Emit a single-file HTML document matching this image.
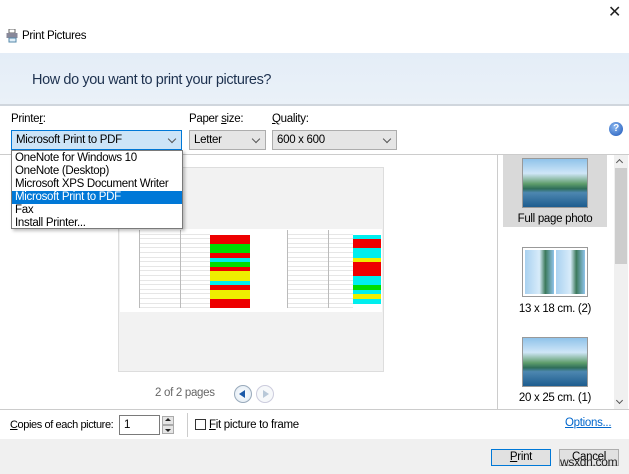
<!DOCTYPE html>
<html><head><meta charset="utf-8"><style>
*{margin:0;padding:0;box-sizing:border-box}
body{width:629px;height:474px;position:relative;overflow:hidden;background:#fff;font-family:"Liberation Sans",sans-serif;font-size:11px;color:#000;letter-spacing:-0.3px}
.a{position:absolute}
.dd{position:absolute;top:130px;height:20px;border:1px solid #adadad;background:#e5e5e5;padding:3px 4px;font-size:11.5px}
.chev{position:absolute;right:6px;top:5px;width:6px;height:6px;border-right:1px solid #555;border-bottom:1px solid #555;transform:rotate(45deg)}
.item{height:13px;line-height:13px;padding-left:3px;font-size:11.5px;white-space:nowrap}
.row{position:absolute;height:4.6px;border-bottom:1px solid #e6e6e6}
.thumb{position:absolute;left:522px;width:66px;border:1px solid #999;background:linear-gradient(#8fc3ea 0%,#cfe6f7 30%,#5d9c6a 52%,#2f6e5a 62%,#4d87b0 70%,#1d5c8f 100%)}
.lbl{position:absolute;left:503px;width:104px;text-align:center;font-size:11.5px}
.btn{position:absolute;top:449px;height:17px;width:60px;background:#e1e1e1;border:1px solid #adadad;text-align:center;line-height:15px;font-size:11.5px}
</style></head><body>
<div class="a" style="left:608px;top:2px;font-size:16px;color:#222">✕</div>
<svg class="a" style="left:6px;top:29px" width="12" height="14"><rect x="3" y="0" width="6" height="4" fill="#fff" stroke="#666"/><rect x="0.5" y="4" width="11" height="5" fill="#889" /><rect x="3" y="9" width="7" height="4" fill="#dfeef8" stroke="#58a"/></svg>
<div class="a" style="left:22px;top:30px;font-size:11.5px">Print Pictures</div>
<div class="a" style="left:0;top:53px;width:629px;height:53px;background:linear-gradient(#e4edf7,#eaf1f8);border-bottom:2px solid #d0d6dd"></div>
<div class="a" style="left:32px;top:72px;font-size:14.5px;color:#1e3250;letter-spacing:-0.4px">How do you want to print your pictures?</div>
<div class="a" style="left:11px;top:113px;font-size:11.5px">Printe<u>r</u>:</div>
<div class="a" style="left:189px;top:113px;font-size:11.5px">Paper <u>s</u>ize:</div>
<div class="a" style="left:272px;top:113px;font-size:11.5px"><u>Q</u>uality:</div>
<div class="dd" style="left:11px;width:171px;background:#cce4f7;border-color:#0078d7">Microsoft Print to PDF<span class="chev"></span></div>
<div class="dd" style="left:189px;width:77px">Letter<span class="chev"></span></div>
<div class="dd" style="left:272px;width:125px">600 x 600<span class="chev"></span></div>
<div class="a" style="left:609px;top:122px;width:14px;height:14px;border-radius:50%;background:radial-gradient(circle at 40% 35%,#8bb8f0,#1d56b8);color:#fff;font-size:10px;font-weight:bold;text-align:center;line-height:14px">?</div>
<div class="a" style="left:0;top:154px;width:629px;height:1px;background:#ccc"></div>
<div class="a" style="left:497px;top:155px;width:1px;height:254px;background:#ccc"></div>
<div class="a" style="left:118px;top:167px;width:266px;height:205px;background:#f2f2f2;border:1px solid #ddd"></div>
<div class="a" style="left:120px;top:229px;width:262px;height:83px;background:#fff"></div>
<div id="tbl"></div>
<div class="a" style="left:11px;top:150px;width:172px;height:79px;background:#fff;border:1px solid #7a7a7a;box-shadow:2px 2px 3px rgba(0,0,0,.25);padding-top:1px">
<div class="item">OneNote for Windows 10</div><div class="item">OneNote (Desktop)</div><div class="item">Microsoft XPS Document Writer</div><div class="item" style="background:#0078d7;color:#fff">Microsoft Print to PDF</div><div class="item">Fax</div><div class="item">Install Printer...</div></div>
<div class="a" style="left:155px;top:387px;font-size:11.5px;color:#666">2 of 2 pages</div>
<div class="a" style="left:234px;top:385px;width:18px;height:18px;border-radius:50%;border:1px solid #9ab;background:radial-gradient(#fff,#dde8f2)"></div>
<div class="a" style="left:239px;top:390px;width:0;height:0;border-top:4px solid transparent;border-bottom:4px solid transparent;border-right:6px solid #1c5aa8"></div>
<div class="a" style="left:256px;top:385px;width:18px;height:18px;border-radius:50%;border:1px solid #ccd;background:#f6f8fa"></div>
<div class="a" style="left:263px;top:390px;width:0;height:0;border-top:4px solid transparent;border-bottom:4px solid transparent;border-left:6px solid #b8c8d8"></div>
<div class="a" style="left:503px;top:155px;width:104px;height:72px;background:#d9d9d9"></div>
<div class="thumb" style="top:158px;height:50px"></div>
<div class="lbl" style="top:213px">Full page photo</div>
<div class="a" style="left:522px;top:247px;width:66px;height:50px;border:1px solid #999;background:#fff"></div>
<div class="thumb" style="left:525px;top:250px;width:29px;height:44px;border:none;background:linear-gradient(90deg,#a9d1f0,#d8ecfa 50%,#3c7a5c 70%,#8fc3ea)"></div>
<div class="thumb" style="left:556px;top:250px;width:29px;height:44px;border:none;background:linear-gradient(90deg,#a9d1f0,#d8ecfa 50%,#3c7a5c 70%,#8fc3ea)"></div>
<div class="lbl" style="top:303px">13 x 18 cm. (2)</div>
<div class="thumb" style="top:337px;height:50px"></div>
<div class="lbl" style="top:392px">20 x 25 cm. (1)</div>
<div class="a" style="left:614px;top:155px;width:14px;height:254px;background:#f0f0f0"></div>
<div class="a" style="left:615px;top:168px;width:12px;height:96px;background:#cdcdcd"></div>
<div class="a" style="left:617px;top:160px;width:5px;height:5px;border-left:1px solid #555;border-top:1px solid #555;transform:rotate(45deg)"></div>
<div class="a" style="left:617px;top:398px;width:5px;height:5px;border-right:1px solid #555;border-bottom:1px solid #555;transform:rotate(45deg)"></div>
<div class="a" style="left:0;top:409px;width:629px;height:1px;background:#ccc"></div>
<div class="a" style="left:10px;top:419px;font-size:11px;letter-spacing:-0.4px"><u>C</u>opies of each picture:</div>
<div class="a" style="left:119px;top:415px;width:41px;height:20px;border:1px solid #7a7a7a;padding:3px 4px;font-size:11.5px">1</div>
<div class="a" style="left:162px;top:416px;width:12px;height:9px;background:#e5e5e5;border:1px solid #aaa"></div>
<div class="a" style="left:162px;top:425px;width:12px;height:9px;background:#e5e5e5;border:1px solid #aaa"></div>
<div class="a" style="left:165px;top:418px;border-left:3px solid transparent;border-right:3px solid transparent;border-bottom:3px solid #222"></div>
<div class="a" style="left:165px;top:429px;border-left:3px solid transparent;border-right:3px solid transparent;border-top:3px solid #222"></div>
<div class="a" style="left:187px;top:413px;width:1px;height:24px;background:#ccc"></div>
<div class="a" style="left:195px;top:419px;width:11px;height:11px;border:1px solid #333;background:#fff"></div>
<div class="a" style="left:209px;top:419px;font-size:11.5px"><u>F</u>it picture to frame</div>
<div class="a" style="left:565px;top:417px;font-size:11.5px;color:#0066cc;text-decoration:underline">Options...</div>
<div class="a" style="left:0;top:439px;width:629px;height:35px;background:#f0f0f0"></div>
<div class="btn" style="left:491px;border-color:#0078d7"><u>P</u>rint</div>
<div class="btn" style="left:559px">Cancel</div>
<div class="a" style="left:560px;top:455px;font-size:12px;color:#222">wsxdn.com</div>
<script>
var L=['#e00','#e00','#0d0','#0d0','#e00','#0ee','#0d0','#e00','#ee0','#ee0','#0ee','#e00','#ee0','#ee0','#e00','#e00'];
var R=['#0ee','#e00','#e00','#0ee','#0ee','#ee0','#e00','#e00','#e00','#0ee','#0ee','#0d0','#0ee','#ee0','#0ee','#fff'];
var h='';
for(var i=0;i<17;i++){var y=230+i*4.6;
h+='<div class="row" style="left:139px;top:'+y+'px;width:71px"></div>';
h+='<div class="row" style="left:287px;top:'+y+'px;width:66px"></div>';
if(i>0){h+='<div class="a" style="left:210px;top:'+y+'px;width:40px;height:4.6px;background:'+L[i-1]+'"></div>';
h+='<div class="a" style="left:353px;top:'+y+'px;width:28px;height:4.6px;background:'+R[i-1]+'"></div>';}
}
h+='<div class="a" style="left:139px;top:230px;width:1px;height:78px;background:#bbb"></div><div class="a" style="left:180px;top:230px;width:1px;height:78px;background:#bbb"></div><div class="a" style="left:287px;top:230px;width:1px;height:78px;background:#bbb"></div><div class="a" style="left:328px;top:230px;width:1px;height:78px;background:#bbb"></div>';
document.getElementById('tbl').innerHTML=h;
</script>
</body></html>
